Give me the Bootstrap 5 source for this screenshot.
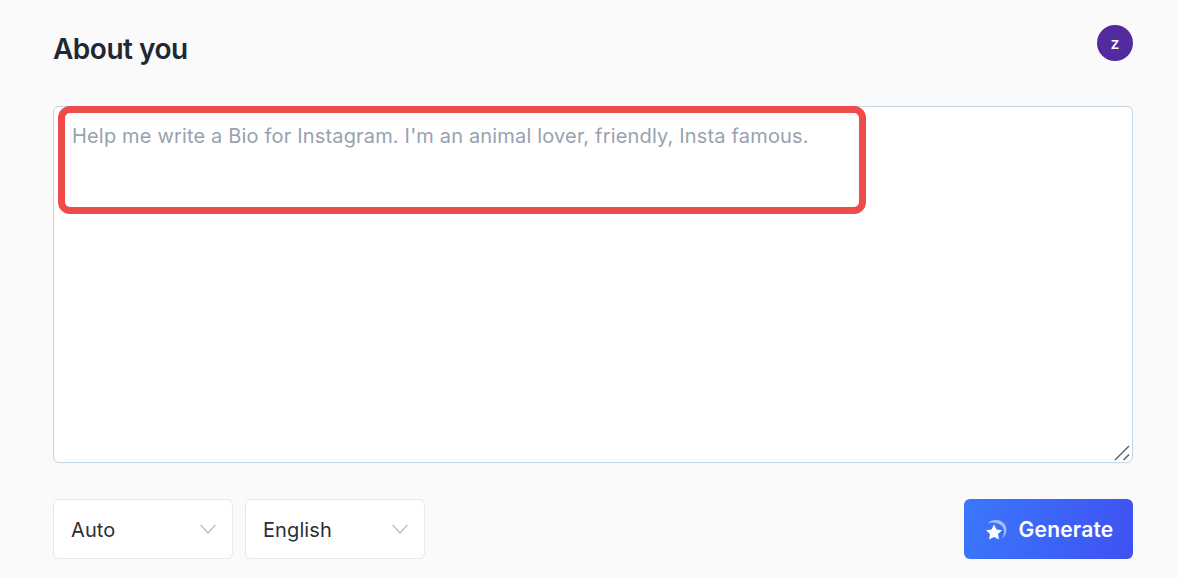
<!DOCTYPE html>
<html lang="en">
<head>
<meta charset="utf-8">
<title>About you</title>
<link href="https://cdn.jsdelivr.net/npm/bootstrap@5.3.0/dist/css/bootstrap.min.css" rel="stylesheet">
<style>
html, body { height: 100%; }
body { background: #fafafa; font-family: Inter, "Liberation Sans", sans-serif; color: #1f2937; overflow: hidden; }
.page-wrap { padding: 25px 45px 0 53px; }
.head-row { height: 36px; margin-bottom: 45px; }
.page-title { font-size: 28px; font-weight: 600; letter-spacing: -0.5px; line-height: 48px; margin: 12px 0 0; color: #1e2935; }
.avatar { width: 36px; height: 36px; background: #522b9e; color: #fff; font-size: 16px; font-weight: 500; }
.text-wrap-box { height: 357px; }
.bio-input.form-control { height: 100%; background: #fff; border: 1px solid #c3d4e3; border-radius: 6px; padding: 15px 18px; font-size: 20px; line-height: 28px; letter-spacing: .17px; resize: none; box-shadow: none; }
.bio-input::placeholder { color: #98a2b0; opacity: 1; }
.callout { left: 5px; top: 0; width: 808px; height: 108px; border: 7px solid #ef4b4b; border-radius: 12px; pointer-events: none; }
.grip { right: 3px; bottom: 2px; width: 16px; height: 16px; pointer-events: none; }
.controls { margin-top: 36px; }
.pick-row { gap: 12px; }
.pick.form-select { width: 180px; height: 60px; border: 1px solid #e8e8ea; border-radius: 6px; background-color: #fff; padding: 2px 17px 0; font-size: 20px; letter-spacing: .1px; color: #2a2f38; box-shadow: none;
  background-image: url("data:image/svg+xml,%3csvg xmlns='http://www.w3.org/2000/svg' viewBox='0 0 16 10'%3e%3cpath fill='none' stroke='%23b4b6bb' stroke-width='1.2' d='M.6.8 8 9 15.4.8'/%3e%3c/svg%3e");
  background-size: 16px 10px; background-position: right 16px center; }
.gen-btn.btn { width: 169px; height: 60px; border: 0; border-radius: 6px; background: linear-gradient(105deg, #3a78fb, #3f51f2); color: #fff; font-size: 21px; font-weight: 600; letter-spacing: .2px; padding: 1px 0 0; gap: 11px; }
.gen-btn svg { width: 24px; height: 24px; }
</style>
</head>
<body>
<main class="page-wrap">
  <div class="head-row d-flex justify-content-between align-items-center">
    <h1 class="page-title">About you</h1>
    <div class="avatar rounded-circle d-flex align-items-center justify-content-center">z</div>
  </div>
  <div class="text-wrap-box position-relative">
    <textarea class="bio-input form-control" placeholder="Help me write a Bio for Instagram. I'm an animal lover, friendly, Insta famous."></textarea>
    <div class="callout position-absolute"></div>
    <svg class="grip position-absolute" viewBox="0 0 16 16" aria-hidden="true"><path d="M1 15 15 1M9.500 15 15 9.500" fill="none" stroke="#555" stroke-width="1.300"/></svg>
  </div>
  <div class="controls d-flex justify-content-between">
    <div class="pick-row d-flex">
      <select class="pick form-select"><option>Auto</option></select>
      <select class="pick form-select"><option>English</option></select>
    </div>
    <button type="button" class="gen-btn btn d-flex align-items-center justify-content-center">
      <svg viewBox="0 0 24 24" aria-hidden="true">
        <path d="M3.500 5.500C7.500 1 16 .8 20 5.500c3.800 4.500 3 11-1.800 15 2.200-4.600 2.800-9-.2-12.400C14.500 4.500 8.500 3.500 3.500 5.500Z" fill="#fff" fill-opacity=".55"/>
        <path d="M10 6.500l2.500 5 5.500.8-4 3.800 1 5.400-5-2.600-5 2.600 1-5.400-4-3.800 5.500-.8Z" fill="#fff"/>
      </svg>
      Generate
    </button>
  </div>
</main>
<script src="https://cdn.jsdelivr.net/npm/bootstrap@5.3.0/dist/js/bootstrap.bundle.min.js"></script>
</body>
</html>
